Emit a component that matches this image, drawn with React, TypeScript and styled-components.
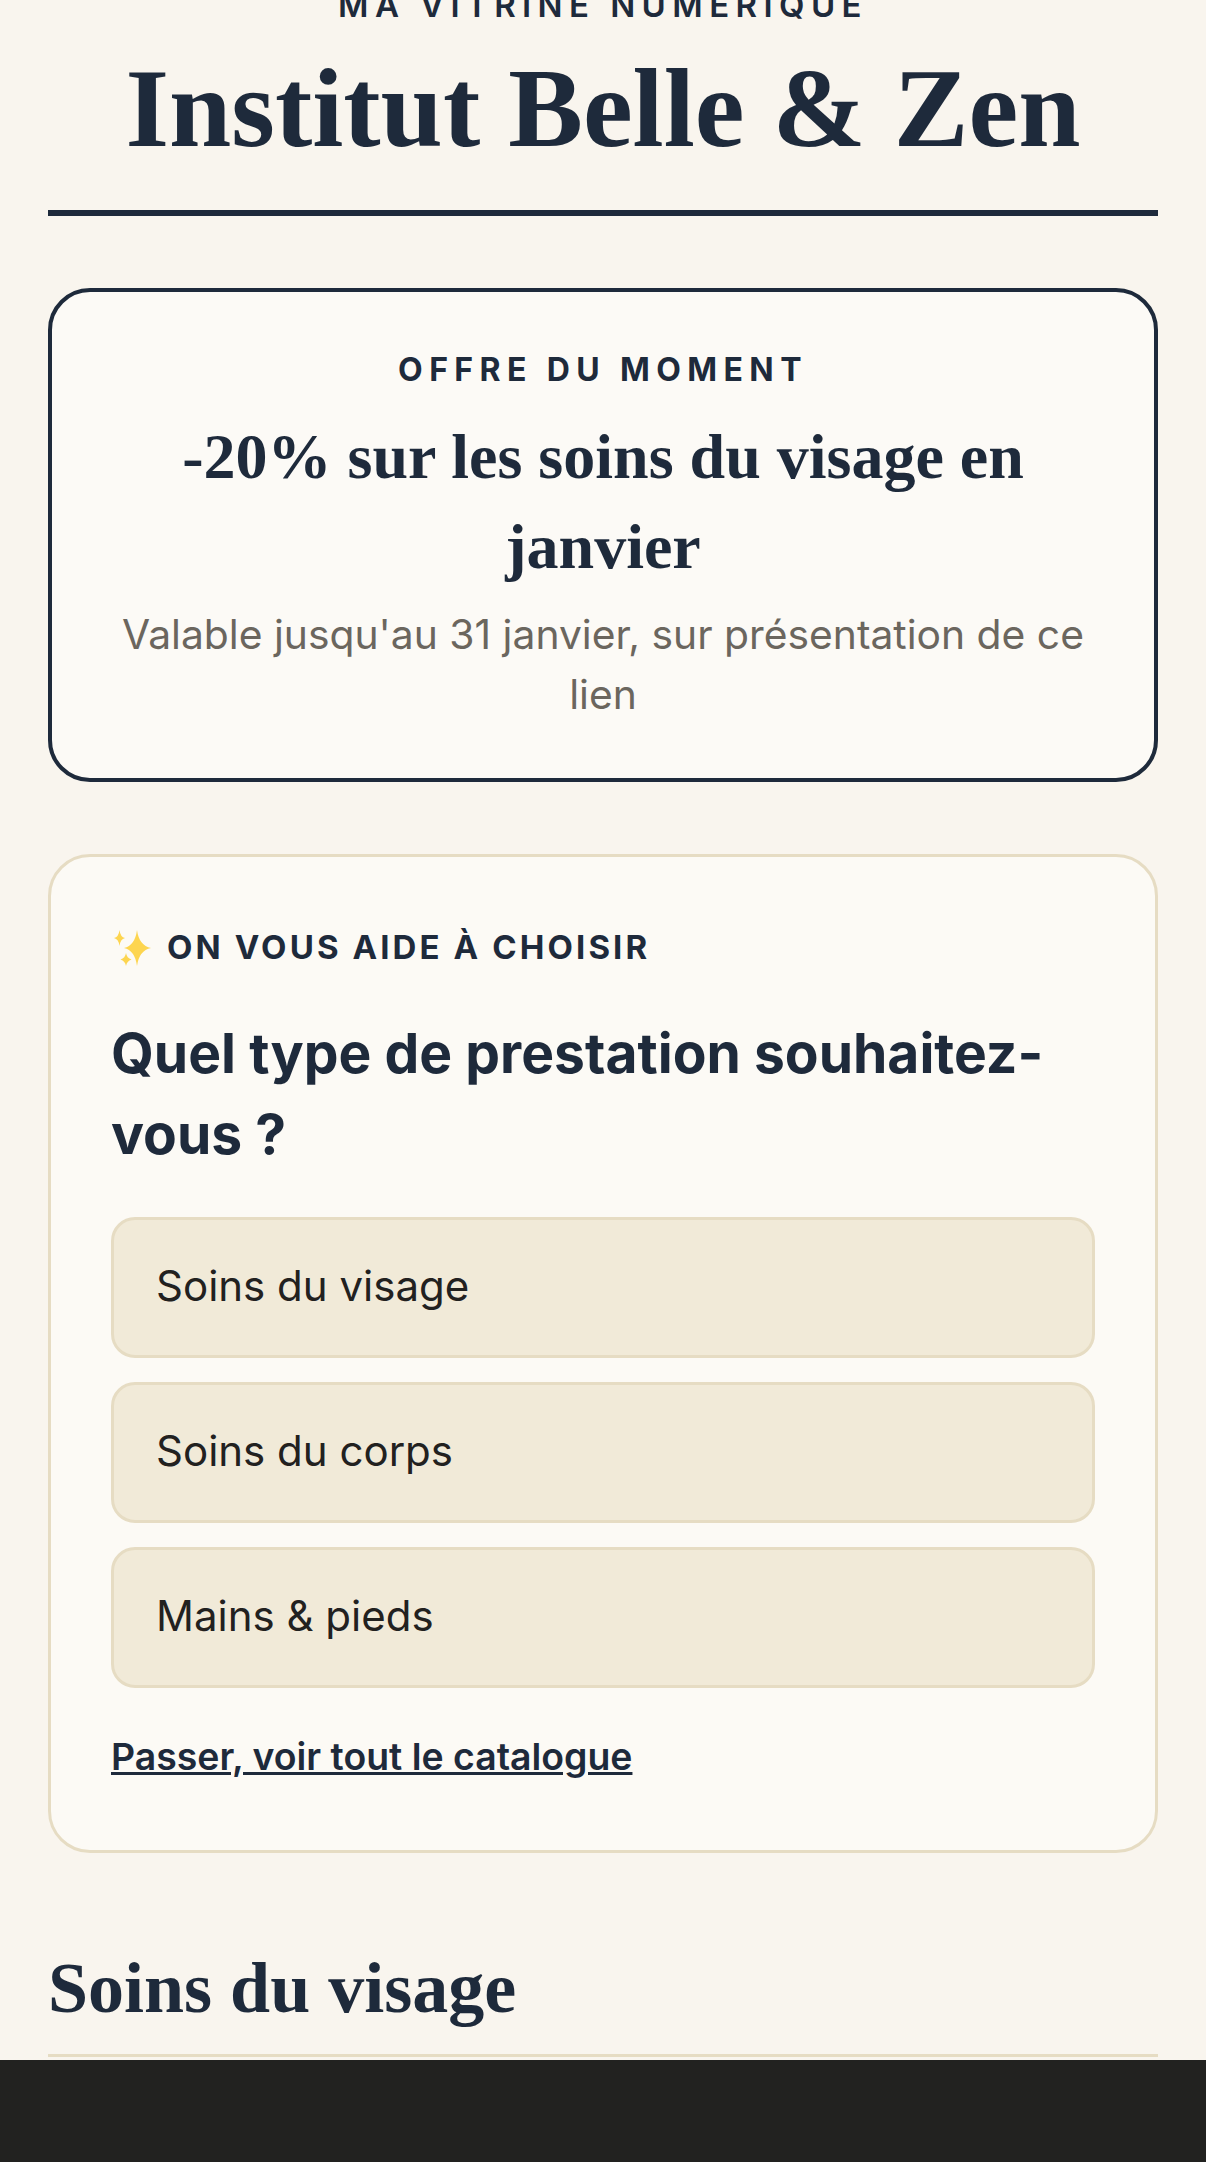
import React from "react";
import styled, { createGlobalStyle } from "styled-components";

const serif = `"Liberation Serif", "DejaVu Serif", serif`;
const navy = "#1e2a3b";
const sand = "#e6dcc3";

const GlobalStyle = createGlobalStyle`
  html, body {
    margin: 0;
    padding: 0;
    background: #f9f5ee;
  }
  * {
    box-sizing: border-box;
  }
`;

const choices = ["Soins du visage", "Soins du corps", "Mains & pieds"];

export default function App() {
  return (
    <Screen>
      <GlobalStyle />
      <Page>
        <Header>
          <Kicker>MA VITRINE NUMÉRIQUE</Kicker>
          <Title>Institut Belle &amp; Zen</Title>
        </Header>

        <OfferCard>
          <OfferLabel>OFFRE DU MOMENT</OfferLabel>
          <OfferTitle>-20% sur les soins du visage en janvier</OfferTitle>
          <OfferNote>Valable jusqu'au 31 janvier, sur présentation de ce lien</OfferNote>
        </OfferCard>

        <QuizCard>
          <QuizLabel>
            <Sparkles viewBox="0 0 38 36" aria-hidden="true">
              <path d="M23 0Q25 15.500 37 18 25 20.500 23 36 21 20.500 10 18 21 15.500 23 0Z" />
              <path d="M5.500 0Q6.300 7 11 8 6.300 9 5.500 16 4.700 9 0 8 4.700 7 5.500 0Z" />
              <path d="M12 23Q12.800 28 17.500 29.500 12.800 31 12 36 11.200 31 6.500 29.500 11.200 28 12 23Z" />
            </Sparkles>
            ON VOUS AIDE À CHOISIR
          </QuizLabel>
          <Question>Quel type de prestation souhaitez-vous ?</Question>
          <Choices>
            {choices.map((choice) => (
              <Choice key={choice}>{choice}</Choice>
            ))}
          </Choices>
          <SkipLink href="#catalogue">Passer, voir tout le catalogue</SkipLink>
        </QuizCard>

        <SectionTitle>Soins du visage</SectionTitle>
      </Page>
      <BottomBar />
    </Screen>
  );
}

const Screen = styled.div`
  width: 1206px;
  height: 2162px;
  display: flex;
  flex-direction: column;
  overflow: hidden;
  background: #f9f5ee;
`;

const Page = styled.main`
  flex: 1;
  min-height: 0;
  overflow: hidden;
  padding: 0 48px;
`;

const Header = styled.header`
  margin-top: -19px;
  border-bottom: 6px solid ${navy};
  padding-bottom: 36px;
  text-align: center;
`;

const Kicker = styled.p`
  margin: 0;
  font: 600 33px/48px Inter, sans-serif;
  letter-spacing: 6.4px;
  color: ${navy};
`;

const Title = styled.h1`
  margin: 13px 0 0;
  font: 700 112px/132px ${serif};
  color: ${navy};
`;

const OfferCard = styled.section`
  margin-top: 72px;
  padding: 55px 60px 54px;
  border: 4px solid ${navy};
  border-radius: 42px;
  background: #fcfaf6;
  text-align: center;
`;

const OfferLabel = styled.p`
  margin: 0;
  font: 700 32px/46px Inter, sans-serif;
  letter-spacing: 6.4px;
  color: ${navy};
`;

const OfferTitle = styled.h2`
  margin: 19px 0 0;
  font: 700 64px/90px ${serif};
  color: ${navy};
`;

const OfferNote = styled.p`
  margin: 12px 0 0;
  font: 400 40.8px/60px Inter, sans-serif;
  color: #6b665e;
`;

const QuizCard = styled.section`
  margin-top: 72px;
  padding: 60px 60px 63px;
  border: 3px solid ${sand};
  border-radius: 42px;
  background: #fcfaf5;
`;

const QuizLabel = styled.p`
  display: flex;
  align-items: center;
  gap: 15px;
  margin: 0;
  font: 700 33px/60px Inter, sans-serif;
  letter-spacing: 3.1px;
  color: ${navy};
`;

const Sparkles = styled.svg`
  width: 38px;
  height: 36px;
  margin: 2px 0 0 3px;
  fill: #fdd54f;
`;

const Question = styled.h3`
  margin: 36px 0 0;
  font: 700 55.2px/81px Inter, sans-serif;
  color: ${navy};
`;

const Choices = styled.div`
  display: flex;
  flex-direction: column;
  gap: 24px;
  margin-top: 42px;
`;

const Choice = styled.button`
  height: 141px;
  padding: 0 42px 3px;
  border: 3px solid ${sand};
  border-radius: 24px;
  background: #f1ead8;
  font: 400 42px/60px Inter, sans-serif;
  color: #22211f;
  text-align: left;
`;

const SkipLink = styled.a`
  display: block;
  margin-top: 39px;
  font: 600 37.4px/60px Inter, sans-serif;
  color: ${navy};
  text-decoration: underline;
`;

const SectionTitle = styled.h2`
  margin: 90px 0 0;
  padding-bottom: 21px;
  border-bottom: 3px solid ${sand};
  font: 700 72px/90px ${serif};
  color: ${navy};
`;

const BottomBar = styled.div`
  flex: none;
  height: 102px;
  background: #222220;
`;
